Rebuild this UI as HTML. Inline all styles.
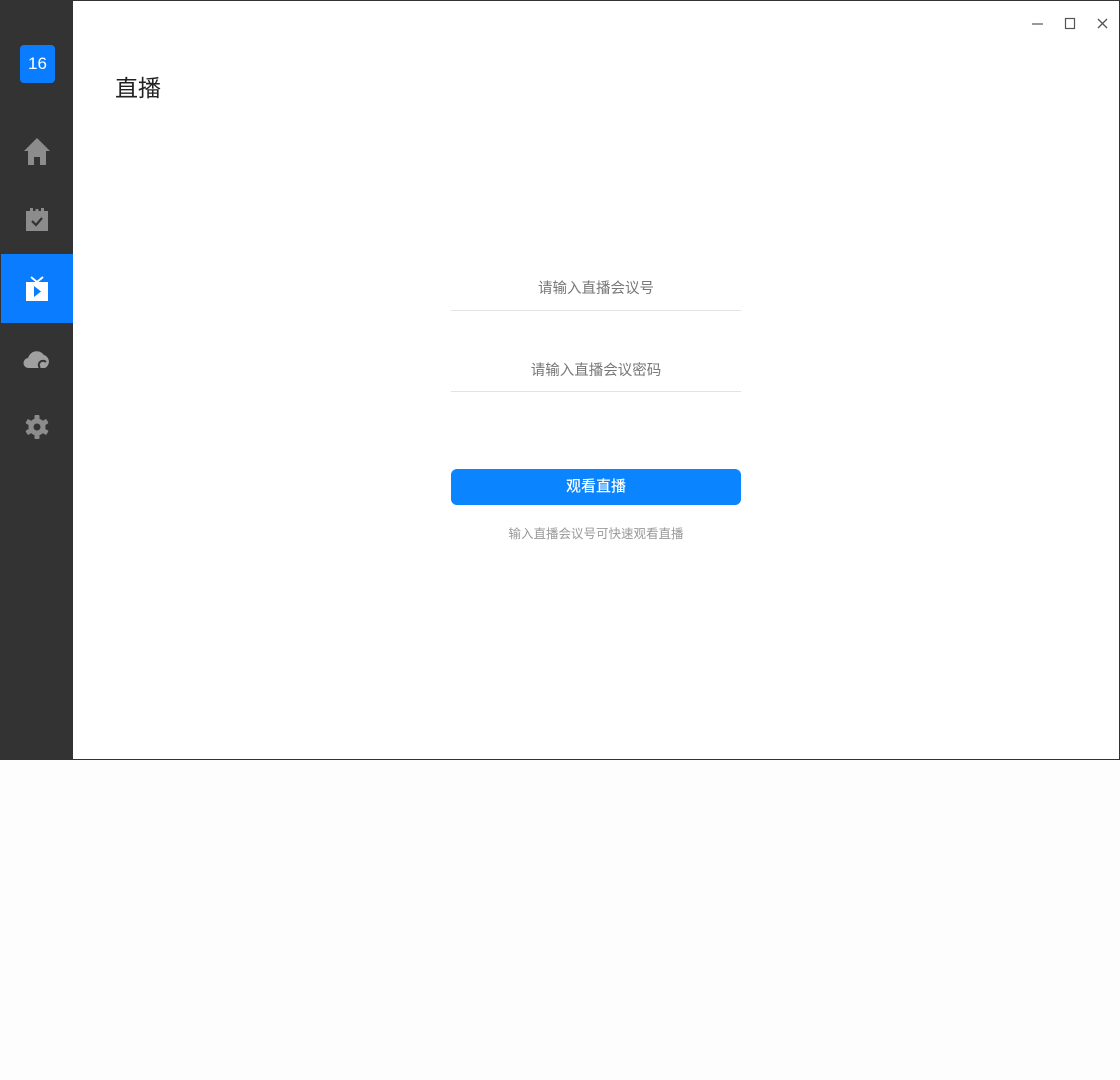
<!DOCTYPE html>
<html><head><meta charset="utf-8"><style>
*{margin:0;padding:0;box-sizing:border-box}
body{width:1120px;height:1080px;background:#fdfdfd;font-family:"Liberation Sans","Noto Sans CJK SC",sans-serif;position:relative;overflow:hidden}
#win{position:absolute;left:0;top:0;width:1120px;height:760px;border:1px solid #333;background:#fff}
#side{position:absolute;left:0;top:0;width:73px;height:760px;background:#333}
.logo{position:absolute;left:20px;top:45px;width:35px;height:38px;background:#0a7cff;border-radius:4px;color:#fff;font-size:17px;text-align:center;line-height:38px}
.ic{position:absolute;left:0;width:73px;height:69px;display:flex;align-items:center;justify-content:center}
.act{background:#0a7cff;left:1px;width:72px}
h1{position:absolute;left:115px;top:72px;font-size:23px;font-weight:normal;color:#222;line-height:32px}
.inp{position:absolute;left:451px;width:290px;border-bottom:1px solid #e3e3e3;text-align:center;color:#777;font-size:14.5px;line-height:22px;padding-top:2px}
.btn{position:absolute;left:451px;top:469px;width:290px;height:36px;background:#0a84ff;border-radius:6px;color:#fff;font-size:15px;font-weight:500;text-align:center;line-height:36px}
.tip{position:absolute;left:451px;width:290px;top:525px;text-align:center;color:#999;font-size:12.5px;line-height:18px}
</style></head><body>
<div id="win"></div>
<div id="side">
<div class="logo">16</div>
<div class="ic" style="top:116px"><svg width="28" height="30" viewBox="0 0 28 30"><path d="M14 2 L1 15 H5 V29 H11 V21 H17 V29 H23 V15 H27 Z" fill="#8c8c8c"/></svg></div>
<div class="ic" style="top:185px"><svg width="24" height="24" viewBox="0 0 24 24"><rect x="1" y="3" width="22" height="20" fill="#8c8c8c"/><rect x="5" y="0" width="3" height="6" fill="#8c8c8c"/><rect x="16" y="0" width="3" height="6" fill="#8c8c8c"/><rect x="10.5" y="1" width="3" height="5" fill="#8c8c8c"/><path d="M7 13 L11 17 L17 10" stroke="#333" stroke-width="2.2" fill="none"/></svg></div>
<div class="ic act" style="top:254px"><svg width="24" height="26" viewBox="0 0 24 26"><path d="M6 1 L12 6 L18 1" stroke="#fff" stroke-width="2" fill="none"/><rect x="1" y="6" width="22" height="19" fill="#fff"/><path d="M9 10 L16 15.5 L9 21 Z" fill="#0a7cff"/></svg></div>
<div class="ic" style="top:323px"><svg width="28" height="22" viewBox="0 0 28 22"><path d="M6 21 A5 5 0 0 1 5 11 A9 9 0 0 1 21 8 A7 7 0 0 1 22 21 Z" fill="#a0a0a0"/><path d="M17 21 A4 4 0 0 1 23 15" stroke="#333" stroke-width="2" fill="none"/></svg></div>
<div class="ic" style="top:392px"><svg width="26" height="26" viewBox="0 0 26 26"><g fill="#8c8c8c"><circle cx="13" cy="13" r="8.5"/><rect x="10.5" y="1" width="5" height="24" rx="1"/><rect x="10.5" y="1" width="5" height="24" rx="1" transform="rotate(60 13 13)"/><rect x="10.5" y="1" width="5" height="24" rx="1" transform="rotate(120 13 13)"/></g><circle cx="13" cy="13" r="3.5" fill="#333"/></svg></div>
</div>
<svg style="position:absolute;left:1030px;top:17px" width="80" height="14"><line x1="2" y1="7" x2="13" y2="7" stroke="#555" stroke-width="1.2"/><rect x="35.5" y="1.5" width="9" height="10" fill="none" stroke="#555" stroke-width="1.2"/><path d="M68 2 L77 11 M77 2 L68 11" stroke="#555" stroke-width="1.3"/></svg>
<h1>直播</h1>
<div class="inp" style="top:276px;height:35px">请输入直播会议号</div>
<div class="inp" style="top:358px;height:34px">请输入直播会议密码</div>
<div class="btn">观看直播</div>
<div class="tip">输入直播会议号可快速观看直播</div>
</body></html>
